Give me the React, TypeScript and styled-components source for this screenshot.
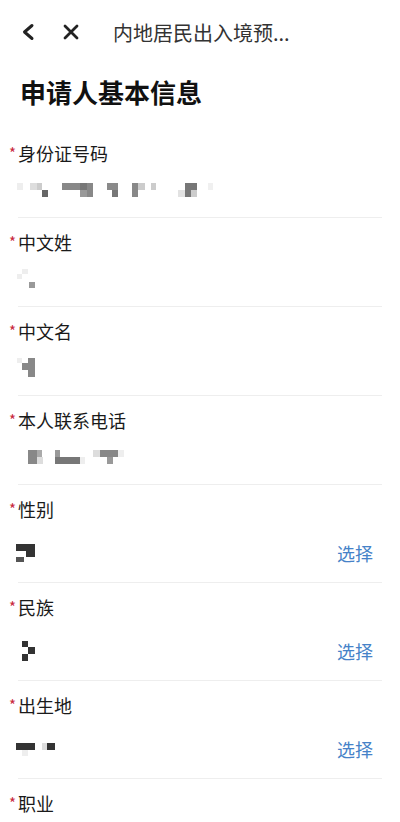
import React from 'react';
import styled, { createGlobalStyle } from 'styled-components';

const GlobalStyle = createGlobalStyle`
  body {
    margin: 0;
    background: #fff;
    font-family: "Noto Sans CJK SC", "Noto Sans", sans-serif;
    color: #1a1a1a;
  }
`;

const Page = styled.div`
  width: 400px;
  height: 822px;
  overflow: hidden;
  background: #fff;
`;

const NavBar = styled.div`
  display: flex;
  align-items: center;
  height: 64px;
  padding-left: 20px;
`;

const NavIcon = styled.svg<{ $gap: number }>`
  width: 18px;
  height: 18px;
  flex: none;
  margin-right: ${(p) => p.$gap}px;
`;

const NavTitle = styled.div`
  font-size: 20px;
  line-height: 26px;
  color: #333;
  white-space: nowrap;
  margin-top: 2px;
`;

const Heading = styled.h1`
  margin: 10px 0 19px;
  padding: 0 20px;
  font-size: 26px;
  line-height: 36px;
  font-weight: 700;
  color: #111;
`;

const Field = styled.div`
  margin: 0 18px;
  padding-top: 11px;
  border-bottom: 1px solid #eeeeee;
`;

const Label = styled.div`
  display: flex;
  font-size: 18px;
  line-height: 26px;
  color: #1a1a1a;
`;

const Star = styled.span`
  width: 9px;
  margin-left: -9px;
  padding-top: 4px;
  font-size: 15px;
  line-height: 18px;
  color: #c8283c;
`;

const ValueRow = styled.div<{ $tall?: boolean }>`
  display: flex;
  align-items: center;
  justify-content: space-between;
  margin-top: 8px;
  height: ${(p) => (p.$tall ? 46 : 31)}px;
  margin-bottom: ${(p) => (p.$tall ? 6 : 12)}px;
  padding-right: 9px;
`;

const Choose = styled.span`
  font-size: 18px;
  line-height: 26px;
  color: #4682c8;
`;

type Cell = [number, number, number, number, string];

const Mosaic = ({ cells, width, height }: { cells: Cell[]; width: number; height: number }) => (
  <svg width={width} height={height} viewBox={`0 0 ${width} ${height}`} style={{ display: 'block', marginLeft: -2 }}>
    {cells.map(([x, y, w, h, c], i) => (
      <rect key={i} x={x} y={y} width={w} height={h} fill={c} />
    ))}
  </svg>
);

const fields: { label: string; cells: Cell[]; w: number; h: number; select?: boolean; last?: boolean }[] = [
  {
    label: '身份证号码',
    w: 200,
    h: 14,
    cells: [
      [1, 0, 6, 7, '#eee'],
      [14, 0, 7, 7, '#ddd'],
      [21, 0, 5, 7, '#ccc'],
      [26, 7, 6, 7, '#666'],
      [46, 0, 18, 7, '#888'],
      [64, 0, 7, 7, '#777'],
      [64, 7, 7, 7, '#999'],
      [71, 0, 6, 14, '#888'],
      [91, 0, 11, 7, '#8a8a8a'],
      [96, 7, 6, 7, '#777'],
      [116, 0, 6, 14, '#888'],
      [122, 0, 7, 7, '#ccc'],
      [135, 0, 5, 7, '#ccc'],
      [162, 7, 7, 7, '#e2e2e2'],
      [169, 0, 12, 7, '#777'],
      [169, 7, 6, 7, '#777'],
      [175, 7, 6, 7, '#ccc'],
      [192, 0, 5, 7, '#f0f0f0'],
    ],
  },
  {
    label: '中文姓',
    w: 20,
    h: 19,
    cells: [
      [1, 5, 5, 5, '#eee'],
      [6, 0, 6, 5, '#eee'],
      [13, 13, 6, 6, '#999'],
    ],
  },
  {
    label: '中文名',
    w: 20,
    h: 19,
    cells: [
      [1, 0, 5, 5, '#eee'],
      [6, 5, 6, 7, '#888'],
      [12, 0, 7, 19, '#888'],
    ],
  },
  {
    label: '本人联系电话',
    w: 110,
    h: 14,
    cells: [
      [12, 0, 9, 14, '#888'],
      [21, 0, 5, 7, '#aaa'],
      [21, 7, 6, 7, '#ddd'],
      [39, 0, 5, 7, '#999'],
      [39, 7, 25, 7, '#777'],
      [64, 7, 5, 7, '#eee'],
      [77, 0, 7, 7, '#ddd'],
      [84, 0, 18, 7, '#888'],
      [91, 7, 6, 7, '#999'],
      [102, 0, 6, 7, '#eee'],
    ],
  },
  {
    label: '性别',
    select: true,
    w: 20,
    h: 18,
    cells: [
      [0, 0, 19, 7, '#333'],
      [10, 7, 9, 6, '#333'],
      [0, 13, 8, 5, '#555'],
    ],
  },
  {
    label: '民族',
    select: true,
    w: 20,
    h: 20,
    cells: [
      [6, 0, 6, 6, '#333'],
      [12, 6, 7, 7, '#333'],
      [6, 13, 6, 7, '#333'],
    ],
  },
  {
    label: '出生地',
    select: true,
    w: 40,
    h: 13,
    cells: [
      [0, 0, 19, 7, '#333'],
      [6, 7, 6, 6, '#eee'],
      [26, 0, 5, 7, '#ddd'],
      [31, 0, 8, 7, '#333'],
    ],
  },
  { label: '职业', select: true, last: true, w: 0, h: 0, cells: [] },
];

const App = () => (
  <>
    <GlobalStyle />
    <Page>
      <NavBar>
        <NavIcon $gap={24} viewBox="0 0 18 18">
          <polyline points="12,2.5 4.5,9 12,15.5" fill="none" stroke="#222" strokeWidth="3" strokeLinecap="round" strokeLinejoin="round" />
        </NavIcon>
        <NavIcon $gap={33} viewBox="0 0 18 18">
          <path d="M3 3 L15 15 M15 3 L3 15" stroke="#222" strokeWidth="2.8" strokeLinecap="round" />
        </NavIcon>
        <NavTitle>内地居民出入境预...</NavTitle>
      </NavBar>
      <Heading>申请人基本信息</Heading>
      {fields.map((f) => (
        <Field key={f.label}>
          <Label>
            <Star>*</Star>
            {f.label}
          </Label>
          <ValueRow $tall={f.select}>
            <Mosaic cells={f.cells} width={f.w} height={f.h} />
            {f.select && !f.last && <Choose>选择</Choose>}
          </ValueRow>
        </Field>
      ))}
    </Page>
  </>
);

export default App;
